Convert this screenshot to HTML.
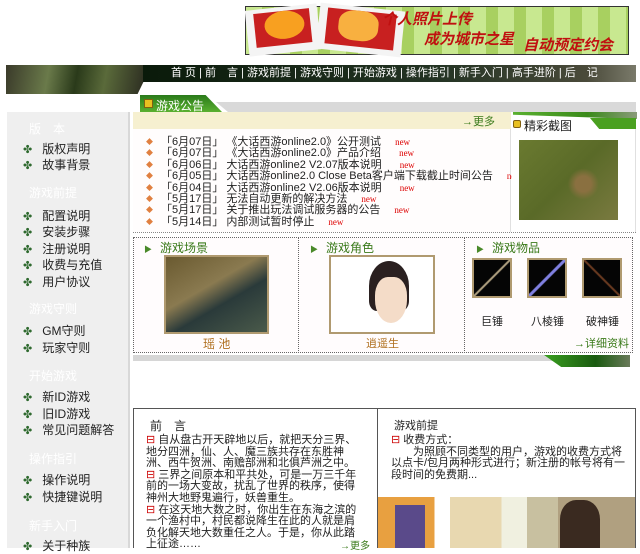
<!DOCTYPE html>
<html><head><meta charset="utf-8"><style>
*{margin:0;padding:0;box-sizing:border-box}
body{width:640px;height:548px;overflow:hidden;background:#fff;position:relative;font-family:"Liberation Sans","Noto Sans CJK SC","WenQuanYi Zen Hei",sans-serif;font-size:12px;color:#222}
.a{position:absolute}
.side{left:7px;top:112px;width:123px;height:436px;background:#efefef;border-right:2px solid #d8d8d8}
.si{position:absolute;left:16px;font-size:12px;color:#222;white-space:nowrap}
.si b{color:#2f6a2f;font-weight:normal;margin-right:10px;font-size:11px}
.sh{position:absolute;left:22px;color:#fff;font-size:12px}
.ann{font-size:11px;white-space:nowrap}
.ann div{height:11.4px;line-height:11.4px}
.ann span.d{color:#e08040;margin-right:8px;font-size:7px;vertical-align:1px}
.ann i{color:#d00;font-style:normal;font-family:"Liberation Serif",serif;font-size:9px;margin-left:14px}
.ttl{color:#3a7a1a;font-size:12px}
.ttl b{color:#4a8a2a;font-size:8px;margin-right:8px}
.box{background:#111;border:2px solid #b09a70}
</style></head><body>
<!-- banner -->
<div class="a" style="left:245px;top:6px;width:384px;height:49px;background:repeating-linear-gradient(90deg,#c8e890 0 16px,#a8d060 16px 28px);border:1px solid #333"></div>
<div class="a" style="left:247px;top:7px;width:72px;height:46px;background:#f4f4f4;transform:rotate(-6deg)"><div style="margin:3px 8px;height:34px;background:#c82020"><div style="margin:4px 10px;width:40px;height:28px;background:#f8a020;border-radius:50%"></div></div></div>
<div class="a" style="left:318px;top:7px;width:85px;height:46px;background:#f4f4f4;transform:rotate(6deg)"><div style="margin:3px 8px;height:36px;background:#c82020"><div style="margin:4px 12px;width:40px;height:30px;background:#f8b040;border-radius:40%"></div></div></div>
<div class="a" style="left:382px;top:8px;font-size:15px;font-weight:bold;font-style:italic;color:#c01010">个人照片上传</div>
<div class="a" style="left:424px;top:28px;font-size:15px;font-weight:bold;font-style:italic;color:#c01010">成为城市之星</div>
<div class="a" style="left:523px;top:34px;font-size:15px;font-weight:bold;font-style:italic;color:#c01010">自动预定约会</div>
<!-- nav -->
<div class="a" style="left:6px;top:65px;width:140px;height:29px;background:linear-gradient(100deg,#3a3a2a,#6a7a4a 30%,#2a3a1a 50%,#5a6a3a 70%,#2a2a20);clip-path:polygon(0 0,100% 0,100% 40%,94% 100%,0 100%)"></div>
<div class="a" style="left:143px;top:65px;width:493px;height:17px;background:linear-gradient(90deg,#0a1a0a,#243424 60%,#4a4a3a 90%,#7a7a6a);color:#fff;font-size:11px;line-height:17px;white-space:nowrap;padding-left:28px;overflow:hidden">首 页 | 前　言 | 游戏前提 | 游戏守则 | 开始游戏 | 操作指引 | 新手入门 | 高手进阶 | 后　记</div>
<!-- tab -->
<div class="a" style="left:140px;top:95px;width:82px;height:17px;background:linear-gradient(#2a7a1a,#5ab030);clip-path:polygon(0 0,80% 0,100% 100%,0 100%)"></div>
<div class="a" style="left:216px;top:102px;width:420px;height:10px;background:#d9d9d9;clip-path:polygon(0 0,100% 0,100% 100%,12px 100%)"></div>
<div class="a" style="left:144px;top:99px;width:9px;height:9px;background:#e8c020;border:1px solid #806010"></div>
<div class="a" style="left:156px;top:97px;color:#fff;font-size:12px">游戏公告</div>
<!-- side -->
<div class="a side">
<div class="sh" style="top:8px">版　本</div>
<div class="si" style="top:28px"><b>✤</b>版权声明</div>
<div class="si" style="top:44px"><b>✤</b>故事背景</div>
<div class="sh" style="top:72px">游戏前提</div>
<div class="si" style="top:95px"><b>✤</b>配置说明</div>
<div class="si" style="top:111px"><b>✤</b>安装步骤</div>
<div class="si" style="top:128px"><b>✤</b>注册说明</div>
<div class="si" style="top:144px"><b>✤</b>收费与充值</div>
<div class="si" style="top:161px"><b>✤</b>用户协议</div>
<div class="sh" style="top:188px">游戏守则</div>
<div class="si" style="top:210px"><b>✤</b>GM守则</div>
<div class="si" style="top:227px"><b>✤</b>玩家守则</div>
<div class="sh" style="top:255px">开始游戏</div>
<div class="si" style="top:276px"><b>✤</b>新ID游戏</div>
<div class="si" style="top:293px"><b>✤</b>旧ID游戏</div>
<div class="si" style="top:309px"><b>✤</b>常见问题解答</div>
<div class="sh" style="top:338px">操作指引</div>
<div class="si" style="top:359px"><b>✤</b>操作说明</div>
<div class="si" style="top:376px"><b>✤</b>快捷键说明</div>
<div class="sh" style="top:405px">新手入门</div>
<div class="si" style="top:425px"><b>✤</b>关于种族</div>
</div>
<!-- announcements -->
<div class="a" style="left:133px;top:112px;width:378px;height:17px;background:#f6f0d0"></div>
<div class="a" style="left:462px;top:113px;color:#3a7a1a;font-size:11px">→更多</div>
<div class="a" style="left:133px;top:129px;width:378px;height:103px;background:#fffdfd;border-right:1px solid #e0e0e0"></div>
<div class="a ann" style="left:146px;top:137px">
<div><span class="d">◆</span>「6月07日」 《大话西游online2.0》公开测试<i>new</i></div>
<div><span class="d">◆</span>「6月07日」 《大话西游online2.0》产品介绍<i style="margin-left:18px">new</i></div>
<div><span class="d">◆</span>「6月06日」 大话西游online2 V2.07版本说明<i style="margin-left:18px">new</i></div>
<div><span class="d">◆</span>「6月05日」 大话西游online2.0 Close Beta客户端下载截止时间公告<i>new</i></div>
<div><span class="d">◆</span>「6月04日」 大话西游online2 V2.06版本说明<i style="margin-left:18px">new</i></div>
<div><span class="d">◆</span>「5月17日」 无法自动更新的解决方法<i>new</i></div>
<div><span class="d">◆</span>「5月17日」 关于推出玩法调试服务器的公告<i>new</i></div>
<div><span class="d">◆</span>「5月14日」 内部测试暂时停止<i>new</i></div>
</div>
<!-- screenshot panel -->
<div class="a" style="left:512px;top:112px;width:124px;height:120px;background:#fff;border-right:1px solid #e0e0e0"></div>
<div class="a" style="left:513px;top:112px;width:124px;height:7px;background:linear-gradient(90deg,#5ab030,#3a8a1a 60%,#8a9a7a);clip-path:polygon(0 0,100% 0,100% 100%,0 40%)"></div>
<div class="a" style="left:590px;top:118px;width:46px;height:11px;background:#4aa020;clip-path:polygon(0 0,100% 0,100% 100%,20% 100%)"></div>
<div class="a" style="left:513px;top:120px;width:8px;height:8px;background:#e8c020;border:1px solid #806010;border-radius:2px"></div>
<div class="a" style="left:524px;top:117px;font-size:12px;color:#222">精彩截图</div>
<div class="a" style="left:519px;top:140px;width:99px;height:80px;background:radial-gradient(circle at 65% 55%,#8a7040 0 10%,transparent 20%),linear-gradient(135deg,#6a7a30,#5a6a28 50%,#7a7a40)"></div>
<!-- three columns -->
<div class="a" style="left:133px;top:232px;width:503px;height:5px;border-top:1px dotted #888"></div>
<div class="a" style="left:133px;top:237px;width:500px;height:116px;border:1px dotted #666;background:#fffcfd"></div>
<div class="a" style="left:298px;top:237px;height:116px;border-left:1px dotted #666"></div>
<div class="a" style="left:464px;top:237px;height:116px;border-left:1px dotted #666"></div>
<div class="a ttl" style="left:144px;top:239px"><b>▶</b>游戏场景</div>
<div class="a ttl" style="left:310px;top:239px"><b>▶</b>游戏角色</div>
<div class="a ttl" style="left:476px;top:239px"><b>▶</b>游戏物品</div>
<div class="a" style="left:164px;top:255px;width:105px;height:79px;border:2px solid #b09a70;background:linear-gradient(150deg,#6a5a30,#8a7a50 40%,#2a3a3a 60%,#4a5a4a)"></div>
<div class="a" style="left:203px;top:335px;color:#b07020;font-size:12px">瑶 池</div>
<div class="a" style="left:329px;top:255px;width:106px;height:79px;border:2px solid #b09a70;background:#fff"><div style="position:absolute;left:38px;top:4px;width:40px;height:50px;background:#2a2020;border-radius:50% 50% 20% 20%"></div><div style="position:absolute;left:44px;top:20px;width:32px;height:46px;background:#f4dcc8;border-radius:40% 40% 50% 50%"></div></div>
<div class="a" style="left:366px;top:335px;color:#b07020;font-size:11px">逍遥生</div>
<div class="a box" style="left:472px;top:258px;width:40px;height:40px;background:linear-gradient(135deg,transparent 47%,#b0a080 49% 51%,transparent 53%),#050505"></div>
<div class="a box" style="left:527px;top:258px;width:40px;height:40px;background:linear-gradient(135deg,transparent 46%,#8080e0 48% 52%,transparent 54%),#050505"></div>
<div class="a box" style="left:582px;top:258px;width:40px;height:40px;background:linear-gradient(45deg,transparent 47%,#6a3a20 49% 51%,transparent 53%),#050505"></div>
<div class="a" style="left:481px;top:313px;font-size:11px">巨锤</div>
<div class="a" style="left:531px;top:313px;font-size:11px">八棱锤</div>
<div class="a" style="left:586px;top:313px;font-size:11px">破神锤</div>
<div class="a" style="left:574px;top:335px;color:#3a7a1a;font-size:11px">→详细资料</div>
<div class="a" style="left:133px;top:355px;width:497px;height:6px;background:#d6d6d6"></div>
<div class="a" style="left:544px;top:355px;width:86px;height:12px;background:linear-gradient(90deg,#3aa020,#1a5a10 60%,#6a7a5a);clip-path:polygon(0 0,100% 0,100% 100%,20% 100%)"></div>
<!-- bottom boxes -->
<div class="a" style="left:133px;top:408px;width:245px;height:140px;border:1px solid #555;border-bottom:none;background:#fff"></div>
<div class="a" style="left:377px;top:408px;width:259px;height:140px;border:1px solid #555;border-bottom:none;background:#fff"></div>
<div class="a" style="left:150px;top:417px;font-size:12px">前　言</div>
<div class="a" style="left:146px;top:435px;width:214px;font-size:11px;line-height:11.6px">
<span style="color:#c00">⊟</span> 自从盘古开天辟地以后，就把天分三界、地分四洲，仙、人、魔三族共存在东胜神洲、西牛贺洲、南赡部洲和北俱芦洲之中。<br>
<span style="color:#c00">⊟</span> 三界之间原本和平共处，可是一万三千年前的一场大变故，扰乱了世界的秩序，使得神州大地野鬼遍行，妖兽重生。<br>
<span style="color:#c00">⊟</span> 在这天地大数之时，你出生在东海之滨的一个渔村中，村民都说降生在此的人就是肩负化解天地大数重任之人。于是，你从此踏上征途……</div>
<div class="a" style="left:340px;top:537px;color:#3a7a1a;font-size:10px">→更多</div>
<div class="a" style="left:394px;top:417px;font-size:11px">游戏前提</div>
<div class="a" style="left:391px;top:435px;width:236px;font-size:11px;line-height:11.6px"><span style="color:#c00">⊟</span> 收费方式：<br>　　为照顾不同类型的用户，游戏的收费方式将以点卡/包月两种形式进行；新注册的帐号将有一段时间的免费期...</div>
<div class="a" style="left:378px;top:497px;width:257px;height:51px;background:linear-gradient(90deg,#e8a040 0 22%,#fff 22% 28%,#e8d8b0 28% 48%,#f0f0e0 48% 58%,#c8c0a0 58% 70%,#b0a080 70% 100%)"></div>
<div class="a" style="left:560px;top:500px;width:40px;height:48px;background:#3a2a20;border-radius:40% 40% 0 0"></div>
<div class="a" style="left:395px;top:505px;width:30px;height:43px;background:#5a4a8a"></div>
</body></html>
